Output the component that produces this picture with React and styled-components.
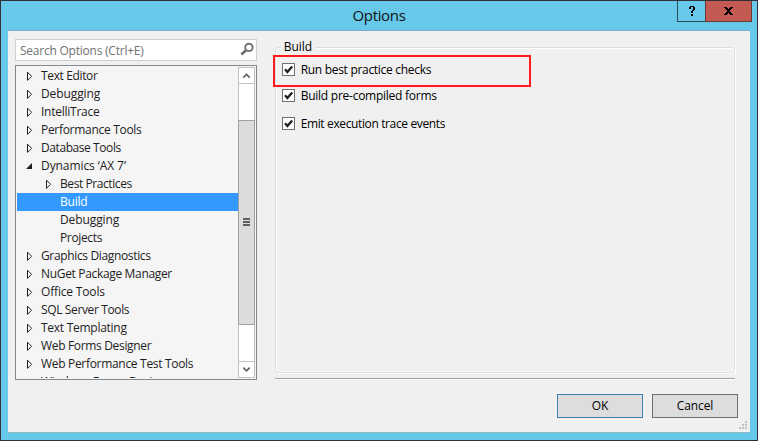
import React from "react";
import styled, { createGlobalStyle } from "styled-components";

const Global = createGlobalStyle`
  * { box-sizing: border-box; }
  body { margin: 0; overflow: hidden; }
`;

const Window = styled.div`
  position: relative;
  width: 758px;
  height: 441px;
  padding: 0 7px 7px;
  display: flex;
  flex-direction: column;
  background: #66c9ea;
  border: 1px solid #303036;
  font: 12px/18px "Open Sans", "Noto Sans", sans-serif;
  color: #1e1e1e;
`;

const TitleBar = styled.header`
  height: 29px;
  flex: none;
  text-align: center;
  font-size: 15px;
  line-height: 29px;
  color: #111;
`;

const Fit = styled.span`
  display: inline-block;
  white-space: pre;
  letter-spacing: ${(p) => p.$ls || 0}px;
`;

const Caption = styled.div`
  position: absolute;
  top: 0;
  right: 5px;
  display: flex;
`;

const CaptionButton = styled.button`
  width: ${(p) => (p.$close ? 47 : 29)}px;
  height: 21px;
  margin: 0 0 0 ${(p) => (p.$close ? -1 : 0)}px;
  padding: 0;
  display: flex;
  background: ${(p) => (p.$close ? "#c35b52" : "#66c9ea")};
  border: 1px solid ${(p) => (p.$close ? "#6d3a38" : "#294b58")};
  border-top: 0;
`;

const Body = styled.main`
  height: 403px;
  display: flex;
  flex-direction: column;
  background: #f0f0f0;
  border-top: 1px solid #7cacc6;
  border-bottom: 1px solid #8fb4c2;
`;

const Panes = styled.div`
  display: flex;
  gap: 18px;
  padding: 8px 15px 0 7px;
  height: 349px;
`;

const Sidebar = styled.aside`
  width: 242px;
  display: flex;
  flex-direction: column;
  gap: 4px;
`;

const Search = styled.div`
  height: 22px;
  flex: none;
  padding: 0 1px 0 4px;
  display: flex;
  justify-content: space-between;
  line-height: 22px;
  color: #717171;
  background: #fff;
  border: 1px solid #ccceda;
`;

const Tree = styled.div`
  height: 315px;
  padding: 1px;
  display: flex;
  background: #f5f5f5;
  border: 1px solid #828790;
`;

const Rows = styled.div`
  flex: 1;
  overflow: hidden;
`;

const Row = styled.div`
  height: 18px;
  padding-left: ${(p) => 10 + p.$depth * 19}px;
  display: flex;
  color: ${(p) => (p.$selected ? "#fff" : "#1e1e1e")};
  background: ${(p) => (p.$selected ? "#3399ff" : "transparent")};
`;

const Expander = styled.svg`
  width: 14px;
  height: 18px;
  flex: none;
  overflow: visible;
`;

const ScrollBar = styled.div`
  width: 17px;
  display: flex;
  flex-direction: column;
  background: #fff;
  border: 1px solid #c1c1c1;
  border-width: 0 1px;
`;

const ScrollArrow = styled.div`
  height: 17px;
  display: flex;
  border: 1px solid #c1c1c1;
  border-width: 1px 0;
`;

const Thumb = styled.div`
  height: 205px;
  margin: 36px -1px;
  padding-bottom: 1px;
  display: flex;
  align-items: center;
  justify-content: center;
  background: #dcdcdc;
  border: 1px solid #a0a0a0;
`;

const Detail = styled.section`
  width: 461px;
  padding-top: 8px;
`;

const Group = styled.div`
  position: relative;
  height: 326px;
  border: 1px solid #d5dfe5;
  border-radius: 3px;
  box-shadow: inset 1px 1px #fff, inset -1px -1px #f8f8f8, 1px 1px #fff;
`;

const Legend = styled.div`
  position: absolute;
  left: 5px;
  top: -10px;
  padding: 0 3px;
  background: #f0f0f0;
  color: #000;
`;

const Options = styled.div`
  padding: 13px 0 0 6px;
  display: flex;
  flex-direction: column;
`;

const Option = styled.label`
  height: 18px;
  margin-bottom: ${(p) => p.$gap}px;
  display: flex;
  align-items: center;
  gap: 6px;
  color: #000;
`;

const Box = styled.svg`
  width: 13px;
  height: 13px;
  margin-bottom: 1px;
`;

const Highlight = styled.div`
  position: absolute;
  left: -3px;
  top: 7px;
  width: 258px;
  height: 32px;
  border: 2px solid #ff191b;
`;

const Divider = styled.div`
  height: 2px;
  margin-top: 5px;
  background: #a0a0a0;
  border-bottom: 1px solid #fff;
`;

const Footer = styled.footer`
  position: relative;
  display: flex;
  justify-content: flex-end;
  gap: 9px;
  padding: 14px 12px 0 0;
  height: 52px;
`;

const Button = styled.button`
  width: 86px;
  height: 24px;
  padding: 0;
  font: inherit;
  line-height: 22px;
  color: #000;
  background: #dddddd;
  border: 1px solid ${(p) => (p.$primary ? "#3c7fb1" : "#707070")};
`;

const Grip = styled.svg`
  position: absolute;
  right: 2px;
  bottom: 2px;
`;

const items = [
  ["Text Editor", 0, "closed", -0.36],
  ["Debugging", 0, "closed", -0.1],
  ["IntelliTrace", 0, "closed", -0.25],
  ["Performance Tools", 0, "closed", -0.3],
  ["Database Tools", 0, "closed", -0.42],
  ["Dynamics ‘AX 7’", 0, "open", -0.08],
  ["Best Practices", 1, "closed", -0.42],
  ["Build", 1, "selected", -0.2],
  ["Debugging", 1, "leaf", -0.1],
  ["Projects", 1, "leaf", -0.35],
  ["Graphics Diagnostics", 0, "closed", -0.35],
  ["NuGet Package Manager", 0, "closed", -0.33],
  ["Office Tools", 0, "closed", -0.17],
  ["SQL Server Tools", 0, "closed", -0.37],
  ["Text Templating", 0, "closed", -0.27],
  ["Web Forms Designer", 0, "closed", -0.33],
  ["Web Performance Test Tools", 0, "closed", -0.31],
  ["Windows Forms Designer", 0, "closed", -0.31],
];

const CheckBox = () => (
  <Box viewBox="0 0 13 13">
    <rect x=".5" y=".5" width="12" height="12" fill="#fff" stroke="#707070" />
    <path d="M3 6.2 5.4 8.9 10.2 3.4" fill="none" stroke="#212121" strokeWidth="2.3" />
  </Box>
);

const Chevron = ({ up }) => (
  <svg width="15" height="15" viewBox="0 0 15 15">
    <path d={up ? "M4.3 9.6 7.5 6.4l3.2 3.2" : "M4.3 5.6 7.5 8.8l3.2-3.2"} fill="none" stroke="#606060" strokeWidth="1.6" />
  </svg>
);

export default function App() {
  return (
    <Window>
      <Global />
      <TitleBar><Fit $ls={-0.35}>Options</Fit></TitleBar>
      <Caption>
        <CaptionButton aria-label="Help">
          <svg width="27" height="20" viewBox="0 0 27 20" shapeRendering="crispEdges">
            <path d="M12 5h4v1h-4zM11 6h2v2h-2zM15 6h2v3h-2zM14 9h2v1h-2zM13 10h2v2h-2zM13 13h2v2h-2z" fill="#000" />
          </svg>
        </CaptionButton>
        <CaptionButton $close aria-label="Close">
          <svg width="45" height="20" viewBox="0 0 45 20" shapeRendering="crispEdges">
            <path d="M18 6h3v1h-3zM24 6h3v1h-3zM19 7h3v1h-3zM23 7h3v1h-3zM20 8h5v1h-5zM21 9h3v2h-3zM20 11h5v1h-5zM19 12h3v1h-3zM23 12h3v1h-3zM18 13h3v1h-3zM24 13h3v1h-3z" fill="#000" />
          </svg>
        </CaptionButton>
      </Caption>
      <Body>
        <Panes>
          <Sidebar>
            <Search>
              <Fit $ls={-0.23}>Search Options (Ctrl+E)</Fit>
              <svg width="15" height="20" viewBox="0 0 15 20">
                <circle cx="8.9" cy="7.4" r="3.7" fill="none" stroke="#717171" strokeWidth="1.9" />
                <path d="M6 10.2 1.4 14.6" stroke="#717171" strokeWidth="2.7" />
              </svg>
            </Search>
            <Tree>
              <Rows>
                {items.map(([label, depth, state, spacing], i) => (
                  <Row key={i} $depth={depth} $selected={state === "selected"}>
                    <Expander viewBox="0 0 14 18">
                      {state === "closed" && <path d="M.5 5.2v8.1L4.6 9.3z" fill="#fff" stroke="#1e1e1e" />}
                      {state === "open" && <path d="M5 6v6H-1z" fill="#1e1e1e" />}
                    </Expander>
                    <Fit $ls={spacing}>{label}</Fit>
                  </Row>
                ))}
              </Rows>
              <ScrollBar>
                <ScrollArrow><Chevron up /></ScrollArrow>
                <Thumb>
                  <svg width="7" height="8" viewBox="0 0 7 8"><path d="M0 0h7v2H0zM0 3h7v2H0zM0 6h7v2H0z" fill="#606060" /></svg>
                </Thumb>
                <ScrollArrow><Chevron /></ScrollArrow>
              </ScrollBar>
            </Tree>
          </Sidebar>
          <Detail>
            <Group>
              <Legend><Fit>Build</Fit></Legend>
              <Options>
                <Option $gap={8}><CheckBox /><Fit $ls={-0.3}>Run best practice checks</Fit></Option>
                <Option $gap={10}><CheckBox /><Fit $ls={-0.25}>Build pre-compiled forms</Fit></Option>
                <Option $gap={0}><CheckBox /><Fit $ls={-0.37}>Emit execution trace events</Fit></Option>
              </Options>
              <Highlight />
            </Group>
            <Divider />
          </Detail>
        </Panes>
        <Footer>
          <Button $primary><Fit>OK</Fit></Button>
          <Button><Fit $ls={-0.1}>Cancel</Fit></Button>
          <Grip width="9" height="9" viewBox="0 0 9 9">
            <path d="M6 0h2v2H6zM3 3h2v2H3zM6 3h2v2H6zM0 6h2v2H0zM3 6h2v2H3zM6 6h2v2H6z" fill="#c0c0c0" />
          </Grip>
        </Footer>
      </Body>
    </Window>
  );
}
